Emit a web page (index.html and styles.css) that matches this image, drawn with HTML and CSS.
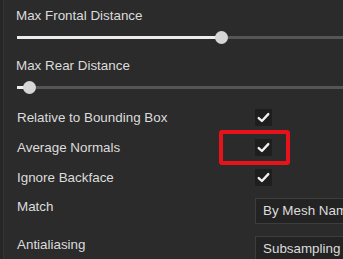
FILE: index.html
```html
<!DOCTYPE html>
<html lang="en">
<head>
    <meta charset="UTF-8">
    <title>Bake Settings</title>
    <link rel="stylesheet" href="styles.css">
</head>
<body>
    <div class="edge"></div>
    <div class="panel">
        <div class="label first">Max Frontal Distance</div>
        <div class="slider">
            <div class="fill" style="width: 204px"></div>
            <div class="thumb" style="left: 198px"></div>
        </div>

        <div class="label second">Max Rear Distance</div>
        <div class="slider">
            <div class="fill" style="width: 12px"></div>
            <div class="thumb" style="left: 6px"></div>
        </div>

        <div class="checks">
            <div class="row">
                <span class="name">Relative to Bounding Box</span>
                <span class="ctrl">
                    <span class="box"><svg viewBox="0 0 16 16"><path d="M3.5 8.5 L6.5 11.3 L12.5 4.8"/></svg></span>
                </span>
            </div>
            <div class="row">
                <span class="name">Average Normals</span>
                <span class="ctrl">
                    <span class="box"><svg viewBox="0 0 16 16"><path d="M3.5 8.5 L6.5 11.3 L12.5 4.8"/></svg></span>
                    <span class="highlight"></span>
                </span>
            </div>
            <div class="row">
                <span class="name">Ignore Backface</span>
                <span class="ctrl">
                    <span class="box"><svg viewBox="0 0 16 16"><path d="M3.5 8.5 L6.5 11.3 L12.5 4.8"/></svg></span>
                </span>
            </div>
        </div>

        <div class="select-row">
            <span class="name">Match</span>
            <div class="select">By Mesh Name</div>
        </div>
        <div class="select-row">
            <span class="name">Antialiasing</span>
            <div class="select">Subsampling 8x8</div>
        </div>
    </div>
</body>
</html>
```
FILE: styles.css
```css
* {
    margin: 0;
    padding: 0;
    box-sizing: border-box;
}

body {
    background: #2b2b2b;
    color: #dcdcdc;
    font-family: "Liberation Sans", Arial, sans-serif;
    font-size: 13.4px;
    display: flex;
    height: 259px;
    overflow: hidden;
}

.edge {
    width: 4px;
    flex-shrink: 0;
    background: #262626;
    border-right: 1px solid #333;
}

.panel {
    flex: 1;
    padding-left: 12px;
    position: relative;
}

.label {
    line-height: 20px;
    height: 20px;
}

.label.first {
    margin-top: 6px;
}

.label.second {
    margin-top: 12px;
}

.slider {
    position: relative;
    height: 14px;
    margin-top: 4px;
    margin-left: 1px;
}

.slider::before {
    content: "";
    position: absolute;
    left: 0;
    right: 0;
    top: 6px;
    height: 3px;
    background: #555;
}

.fill {
    position: absolute;
    left: 0;
    top: 6px;
    height: 3px;
    background: #ececec;
}

.thumb {
    position: absolute;
    top: 1px;
    width: 13px;
    height: 13px;
    border-radius: 50%;
    background: #d6d6d6;
}

.checks {
    margin-top: 8px;
}

.row {
    display: flex;
    align-items: center;
    height: 30px;
}

.name {
    width: 238px;
    margin-left: 1px;
}

.ctrl {
    position: relative;
    display: flex;
    align-items: center;
}

.box {
    width: 17px;
    height: 17px;
    background: #1e1e1e;
    display: flex;
}

.box svg {
    width: 17px;
    height: 17px;
    fill: none;
    stroke: #f2f2f2;
    stroke-width: 2.2;
    stroke-linecap: round;
    stroke-linejoin: round;
}

.highlight {
    position: absolute;
    left: -36px;
    top: -9px;
    width: 71px;
    height: 35px;
    border: 4px solid #e8121b;
    border-radius: 3px;
}

.select-row {
    display: flex;
    align-items: flex-start;
    height: 38px;
}

.select-row .name {
    line-height: 30px;
}

.select {
    margin-top: 6px;
    height: 26px;
    flex: 1;
    margin-right: -20px;
    background: #232323;
    border: 1px solid #3d3d3d;
    padding-left: 7px;
    line-height: 24px;
    white-space: nowrap;
    overflow: hidden;
}
```
